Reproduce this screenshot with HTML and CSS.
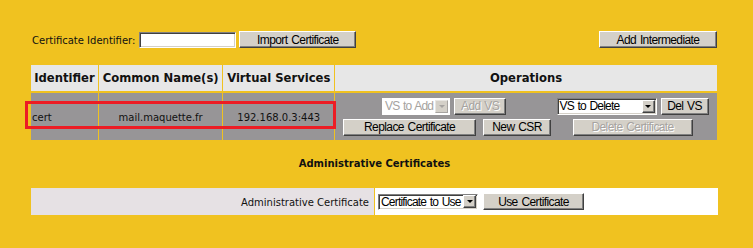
FILE: index.html
```html
<!DOCTYPE html>
<html lang="en">
<head>
    <meta charset="UTF-8">
    <meta name="viewport" content="width=device-width, initial-scale=1.0">
    <title>SSL Certificates</title>
    <link rel="stylesheet" href="styles.css">
</head>
<body>
    <div class="page">
        <div class="toolbar">
            <label class="field-label" for="cert-id">Certificate Identifier:</label>
            <input class="text-input" id="cert-id" type="text">
            <button class="btn btn-import">Import Certificate</button>
            <button class="btn btn-intermediate">Add Intermediate</button>
        </div>

        <table class="cert-table">
            <thead>
                <tr>
                    <th class="col-id">Identifier</th>
                    <th class="col-cn">Common Name(s)</th>
                    <th class="col-vs">Virtual Services</th>
                    <th class="col-ops">Operations</th>
                </tr>
            </thead>
            <tbody>
                <tr>
                    <td class="cell-id">cert</td>
                    <td class="cell-center">mail.maquette.fr</td>
                    <td class="cell-center">192.168.0.3:443</td>
                    <td class="cell-ops">
                        <div class="ops-grid">
                            <div class="ops-group ops-add">
                                <span class="combo combo-add disabled">
                                    <span class="combo-text">VS to Add</span>
                                    <span class="combo-btn"><span class="arrow"></span></span>
                                </span>
                                <button class="btn btn-addvs" disabled>Add VS</button>
                            </div>
                            <div class="ops-group">
                                <span class="combo combo-del">
                                    <span class="combo-text">VS to Delete</span>
                                    <span class="combo-btn"><span class="arrow"></span></span>
                                </span>
                                <button class="btn btn-delvs">Del VS</button>
                            </div>
                            <div class="ops-group">
                                <button class="btn btn-replace">Replace Certificate</button>
                            </div>
                            <div class="ops-group">
                                <button class="btn btn-csr">New CSR</button>
                            </div>
                            <div class="ops-group">
                                <button class="btn btn-delcert" disabled>Delete Certificate</button>
                            </div>
                        </div>
                    </td>
                </tr>
            </tbody>
        </table>

        <h2 class="section-title">Administrative Certificates</h2>

        <div class="admin-row">
            <div class="admin-label">Administrative Certificate</div>
            <div class="admin-value">
                <span class="combo combo-use">
                    <span class="combo-text">Certificate to Use</span>
                    <span class="combo-btn"><span class="arrow"></span></span>
                </span>
                <button class="btn btn-use">Use Certificate</button>
            </div>
        </div>

        <!-- annotation box around the certificate row -->
        <div class="highlight"></div>
    </div>
</body>
</html>
```

FILE: styles.css
```css
html, body {
    margin: 0;
    padding: 0;
}

body {
    background: #f0c220;
    font-family: "DejaVu Sans", Verdana, sans-serif;
    font-size: 10px;
    color: #111;
}

.page {
    position: relative;
    width: 687px;
    padding: 31px 0 0 31px;
}

/* top bar */
.toolbar {
    display: flex;
    align-items: center;
    height: 17px;
}

.field-label {
    margin: 1px 4px 0 1px;
}

.text-input {
    box-sizing: border-box;
    width: 97px;
    height: 16px;
    margin: 1px 3px 0 0;
    padding: 0;
    background: #fff;
    border: 1px solid;
    border-color: #808080 #fff #fff #808080;
    box-shadow: inset 1px 1px #404040, inset -1px -1px #d4d0c8;
}

.btn {
    box-sizing: border-box;
    height: 17px;
    padding: 0;
    background: #d4d0c8;
    border: 1px solid;
    border-color: #fff #404040 #404040 #fff;
    box-shadow: inset -1px -1px #808080;
    font-family: "Liberation Sans", Arial, sans-serif;
    font-size: 12px;
    letter-spacing: -0.6px;
    word-spacing: 1px;
    color: #000;
    line-height: 14px;
}

.btn:disabled {
    color: #a6a3a0;
    text-shadow: 1px 1px #fff;
}

.btn-import { width: 117px; }
.btn-intermediate { width: 118px; margin-left: auto; margin-right: 1px; }

/* certificate table */
.cert-table {
    margin: 15px 0 0 -1px;
    border-collapse: separate;
    border-spacing: 1px 2px;
    table-layout: fixed;
}

.cert-table th {
    height: 26px;
    padding: 0;
    background: #e7e7e7;
    font-size: 11.6px;
    font-weight: bold;
    color: #111;
    text-align: center;
}

.col-id { width: 67px; }
.col-cn { width: 124px; }
.col-vs { width: 111px; }
.col-ops { width: 382px; }

.cert-table td {
    height: 46px;
    padding: 0;
    background: #979597;
}

.cell-id {
    padding-left: 1px !important;
    padding-top: 1px !important;
}

.cell-center {
    text-align: center;
    padding-top: 1px !important;
}

.cell-ops {
    padding: 0 0 0 5px !important;
}

.ops-grid {
    display: grid;
    grid-template-columns: 139px 76px 155px;
    row-gap: 4px;
    align-items: center;
}

.ops-group {
    display: flex;
    justify-content: center;
    align-items: center;
    gap: 4px;
}

.ops-add {
    grid-column: span 2;
    padding-right: 7px;
}

.btn-addvs { width: 52px; }
.btn-delvs { width: 48px; }
.btn-replace { width: 133px; }
.btn-csr { width: 68px; }
.btn-delcert { width: 120px; }

/* fake combo boxes */
.combo {
    box-sizing: border-box;
    display: flex;
    align-items: center;
    height: 17px;
    background: #fff;
    border: 1px solid;
    border-color: #808080 #fff #fff #808080;
    box-shadow: inset 1px 1px #404040, inset -1px -1px #d4d0c8;
    font-family: "Liberation Sans", Arial, sans-serif;
    font-size: 12px;
    letter-spacing: -0.8px;
    word-spacing: 1px;
    color: #000;
}

.combo-text {
    flex: 1;
    min-width: 0;
    padding-left: 2px;
    white-space: nowrap;
}

.combo-btn {
    box-sizing: border-box;
    display: flex;
    flex-shrink: 0;
    align-items: center;
    justify-content: center;
    width: 13px;
    height: 13px;
    margin-right: 1px;
    background: #d4d0c8;
    border: 1px solid;
    border-color: #fff #404040 #404040 #fff;
    box-shadow: inset -1px -1px #808080;
}

.arrow {
    width: 0;
    height: 0;
    border-left: 3px solid transparent;
    border-right: 3px solid transparent;
    border-top: 3px solid #000;
}

.combo.disabled { border-color: #fff; box-shadow: none; }
.combo.disabled .combo-text { color: #a6a3a0; }
.combo.disabled .combo-btn { border-color: #e8e6e2 #a6a3a0 #a6a3a0 #e8e6e2; box-shadow: none; }
.combo.disabled .arrow { border-top-color: #a6a3a0; }

.combo-add { width: 68px; }
.combo-del { width: 100px; }
.combo-use { width: 100px; height: 16px; }

/* admin section */
.section-title {
    margin: 16px 0 0;
    font-size: 10px;
    line-height: 12px;
    text-align: center;
    color: #111;
}

.admin-row {
    display: flex;
    gap: 1px;
    height: 27px;
    margin-top: 18px;
}

.admin-label {
    width: 343px;
    padding-right: 5px;
    box-sizing: border-box;
    background: #e6e1e4;
    display: flex;
    align-items: center;
    justify-content: flex-end;
    padding-top: 1px;
}

.admin-value {
    flex: 1;
    background: #fff;
    display: flex;
    align-items: center;
    gap: 5px;
    padding-left: 3px;
}

.btn-use { width: 101px; height: 17px; }

.highlight {
    position: absolute;
    left: 25px;
    top: 101px;
    width: 311px;
    height: 28px;
    box-sizing: border-box;
    border: 3px solid #ec1c24;
}
```
